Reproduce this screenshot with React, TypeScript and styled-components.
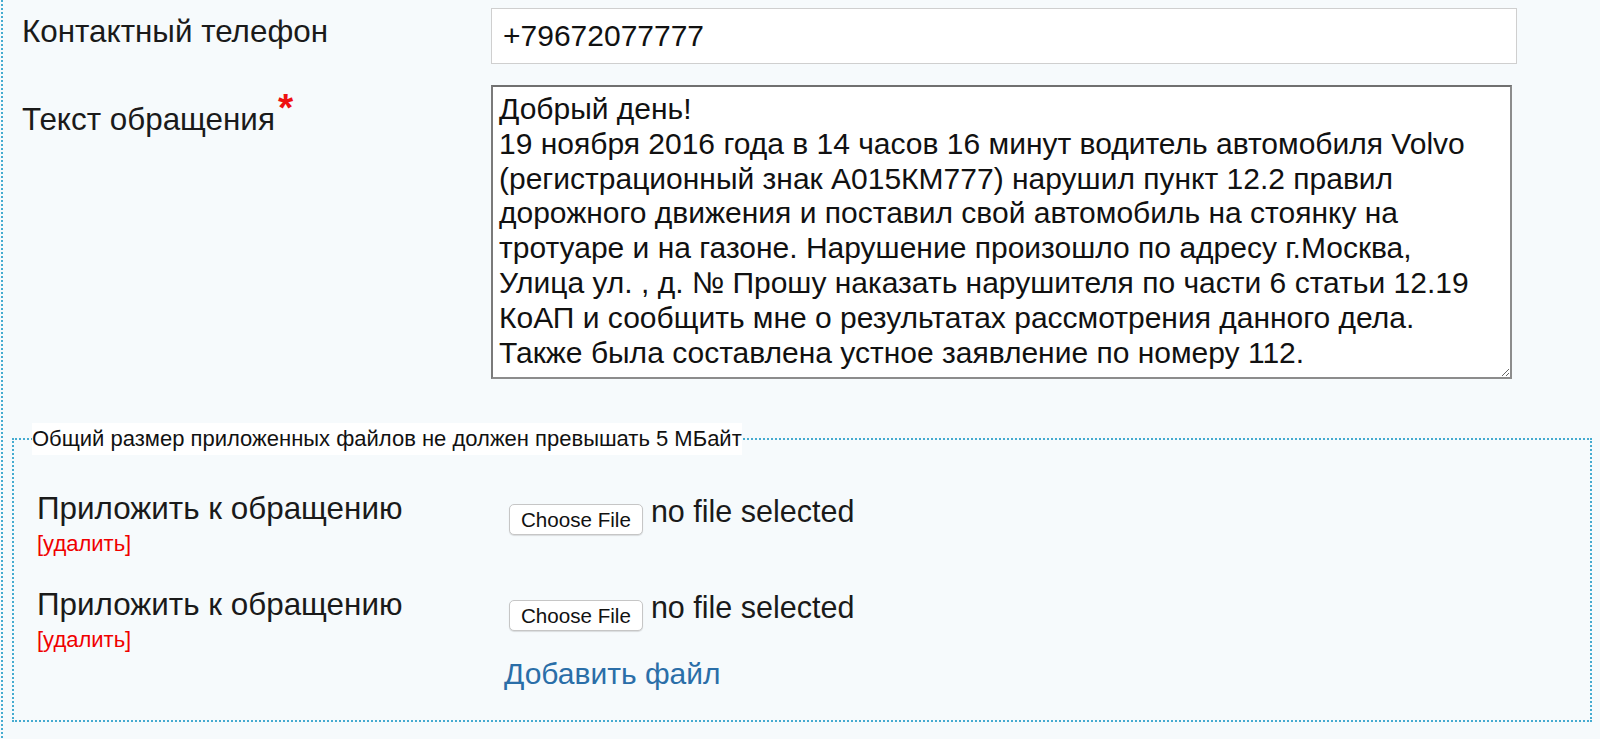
import React from "react";
import styled, { createGlobalStyle } from "styled-components";

const GlobalStyle = createGlobalStyle`
  html, body {
    margin: 0;
    padding: 0;
    background: #f6fafc;
  }
  body {
    font-family: "Liberation Sans", Arial, Helvetica, sans-serif;
    color: #1a1a1a;
  }
  * { box-sizing: border-box; }
`;

const Page = styled.div`
  margin-left: 1px;
  border-left: 2px dotted #45abd0;
  min-height: 100vh;
  padding: 8px 4px 20px 0;
`;

const FormRow = styled.div<{ $gap?: number }>`
  display: grid;
  grid-template-columns: 469px 1fr;
  padding-left: 19px;
  margin-bottom: ${(p) => p.$gap ?? 0}px;
`;

const Label = styled.label<{ $pt?: number }>`
  font-size: 31.4px;
  line-height: 36px;
  color: #1a1a1a;
  padding-top: ${(p) => p.$pt ?? 0}px;
  white-space: nowrap;
`;

const Required = styled.span`
  color: #ee1111;
  font-size: 39px;
  font-weight: bold;
  line-height: 0;
  position: relative;
  top: -9px;
  margin-left: 3px;
`;

const TextInput = styled.input`
  width: 1026px;
  height: 56px;
  border: 1px solid #cfcfcf;
  background: #fff;
  padding: 0 11px;
  font-family: "Liberation Sans", Arial, sans-serif;
  font-size: 30px;
  color: #111;
  outline: none;
`;

const TextArea = styled.textarea`
  width: 1021px;
  height: 294px;
  border: 2px solid #8c8c8c;
  border-top-color: #707070;
  border-left-color: #7a7a7a;
  background: #fff;
  padding: 5px 6px 4px;
  font-family: "Liberation Sans", Arial, sans-serif;
  font-size: 30px;
  line-height: 34.8px;
  color: #111;
  outline: none;
  resize: both;
  overflow: hidden;
`;

const FileSet = styled.fieldset`
  margin: 44px 4px 0 9px;
  padding: 0 18px 0 18px;
  border: 2px dotted #45abd0;
  min-width: 0;
`;

const Legend = styled.legend`
  padding: 0;
  background: #ffffff;
  font-size: 22px;
  line-height: 32px;
  color: #111;
`;

const FileRows = styled.div`
  padding: 36px 0 29px 5px;
  display: flex;
  flex-direction: column;
  gap: 28px;
`;

const FileRow = styled.div`
  display: grid;
  grid-template-columns: 467px 1fr;
`;

const LabelBlock = styled.div`
  display: flex;
  flex-direction: column;
`;

const FileLabel = styled.span`
  font-size: 31.4px;
  line-height: 36px;
  color: #1a1a1a;
  white-space: nowrap;
`;

const RemoveLink = styled.a`
  font-size: 22px;
  line-height: 30px;
  margin-top: 2px;
  color: #f00000;
  text-decoration: none;
  cursor: pointer;
`;

const FileControl = styled.div`
  display: flex;
  align-items: flex-start;
  gap: 8px;
  padding-left: 5px;
  padding-top: 4px;
`;

const ChooseButton = styled.button`
  margin-top: 9px;
  height: 31px;
  padding: 0 11px;
  background: #fff;
  border: 1px solid #c6c6c6;
  border-radius: 5px;
  box-shadow: 0 1px 1px rgba(0, 0, 0, 0.12);
  font-family: "Liberation Sans", Arial, sans-serif;
  font-size: 20.6px;
  color: #111;
  cursor: pointer;
`;

const FileName = styled.span`
  font-size: 30.5px;
  line-height: 32px;
  color: #1a1a1a;
`;

const AddRow = styled.div`
  display: grid;
  grid-template-columns: 467px 1fr;
  margin-top: -26px;
`;

const AddLink = styled.a`
  font-size: 30px;
  line-height: 34px;
  color: #2a6ea8;
  text-decoration: none;
  cursor: pointer;
`;

const message = [
  "Добрый день!",
  "19 ноября 2016 года в 14 часов 16 минут водитель автомобиля Volvo",
  "(регистрационный знак А015КМ777) нарушил пункт 12.2 правил",
  "дорожного движения и поставил свой автомобиль на стоянку на",
  "тротуаре и на газоне. Нарушение произошло по адресу г.Москва,",
  "Улица ул. , д. № Прошу наказать нарушителя по части 6 статьи 12.19",
  "КоАП и сообщить мне о результатах рассмотрения данного дела.",
  "Также была составлена устное заявление по номеру 112.",
].join("\n");

const attachments = [1, 2];

export default function App() {
  return (
    <>
      <GlobalStyle />
      <Page>
        <FormRow $gap={21}>
          <Label $pt={6}>Контактный телефон</Label>
          <TextInput defaultValue="+79672077777" />
        </FormRow>
        <FormRow>
          <Label $pt={17}>
            Текст обращения<Required>*</Required>
          </Label>
          <TextArea defaultValue={message} />
        </FormRow>
        <FileSet>
          <Legend>Общий размер приложенных файлов не должен превышать 5 МБайт</Legend>
          <FileRows>
            {attachments.map((n) => (
              <FileRow key={n}>
                <LabelBlock>
                  <FileLabel>Приложить к обращению</FileLabel>
                  <RemoveLink>[удалить]</RemoveLink>
                </LabelBlock>
                <FileControl>
                  <ChooseButton type="button">Choose File</ChooseButton>
                  <FileName>no file selected</FileName>
                </FileControl>
              </FileRow>
            ))}
            <AddRow>
              <span />
              <AddLink>Добавить файл</AddLink>
            </AddRow>
          </FileRows>
        </FileSet>
      </Page>
    </>
  );
}
